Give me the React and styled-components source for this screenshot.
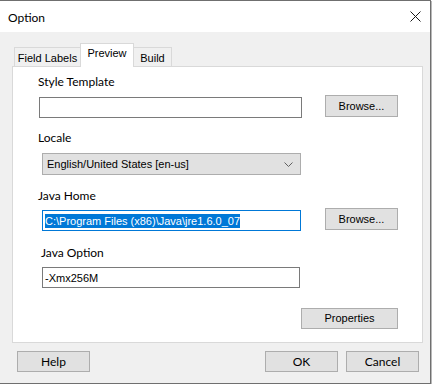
import React from "react";
import styled, { createGlobalStyle } from "styled-components";

const Global = createGlobalStyle`
  html, body { margin: 0; padding: 0; background: #ffffff; }
  body { font-family: "Liberation Sans", Arial, sans-serif; }
`;

const ui = `Lato, "Noto Sans", sans-serif`;
const ms = `"Liberation Sans", Arial, sans-serif`;

const Window = styled.div`
  width: 430px;
  height: 382px;
  border-top: 1px solid #6f6f6f;
  border-right: 1px solid #6f6f6f;
  border-bottom: 1px solid #6f6f6f;
  box-shadow: 1px 1px 0 #b8b8b8;
  display: flex;
  flex-direction: column;
  background: #f0f0f0;
  overflow: hidden;
`;

const TitleBar = styled.div`
  height: 31px;
  flex: none;
  background: #ffffff;
  display: flex;
  align-items: center;
  justify-content: space-between;
  padding: 0 9px 0 8px;
`;

const Title = styled.span`
  font-family: ${ui};
  font-size: 12px;
  color: #000;
  margin-top: 1px;
`;

const Close = styled.svg`
  width: 11px;
  height: 11px;
`;

const Body = styled.div`
  flex: 1;
  display: flex;
  flex-direction: column;
  padding: 11px 7px 0 12px;
`;

const TabStrip = styled.div`
  display: flex;
  align-items: flex-end;
  padding-left: 2px;
  height: 24px;
  position: relative;
  z-index: 1;
`;

const Tab = styled.div`
  height: ${(p) => (p.$active ? "24px" : "20px")};
  box-sizing: border-box;
  border: 1px solid #d9d9d9;
  border-bottom: ${(p) => (p.$active ? "none" : "1px solid #d9d9d9")};
  margin-left: ${(p) => (p.$first ? "0" : "-1px")};
  background: ${(p) => (p.$active ? "#ffffff" : "#f0f0f0")};
  font-family: ${ms};
  font-size: 11px;
  color: #000;
  display: flex;
  align-items: center;
  justify-content: center;
  white-space: nowrap;
  padding-top: ${(p) => (p.$active ? "0" : "2px")};
  padding-bottom: ${(p) => (p.$active ? "5px" : "0")};
  width: ${(p) => p.$w}px;
`;

const Panel = styled.div`
  height: 277px;
  box-sizing: border-box;
  margin-top: -1px;
  border: 1px solid #d9d9d9;
  background: #ffffff;
  display: flex;
  flex-direction: column;
  padding: 7px 0 0 0;
`;

const Label = styled.div`
  font-family: ${ui};
  font-size: 12px;
  line-height: 16px;
  color: #000;
  margin-left: ${(p) => p.$x}px;
  margin-top: ${(p) => p.$top}px;
`;

const Row = styled.div`
  display: flex;
  align-items: flex-start;
  margin-top: ${(p) => p.$top}px;
  margin-left: ${(p) => p.$x}px;
`;

const TextBox = styled.div`
  box-sizing: border-box;
  width: ${(p) => p.$w}px;
  height: ${(p) => p.$h || 21}px;
  margin-top: ${(p) => p.$top || 0}px;
  border: 1px solid ${(p) => (p.$focus ? "#0078d7" : "#7a7a7a")};
  background: #ffffff;
  font-family: ${ms};
  font-size: 11px;
  color: #000;
  display: flex;
  align-items: center;
  padding-left: 2px;
  white-space: nowrap;
  overflow: hidden;
`;

const Selected = styled.span`
  background: #0078d7;
  color: #ffffff;
  line-height: 14px;
`;

const Select = styled.div`
  box-sizing: border-box;
  width: 259px;
  height: 22px;
  border: 1px solid #adadad;
  background: #e1e1e1;
  font-family: ${ms};
  font-size: 11px;
  color: #000;
  display: flex;
  align-items: center;
  justify-content: space-between;
  padding: 0 7px 0 4px;
`;

const Button = styled.div`
  box-sizing: border-box;
  width: ${(p) => p.$w || 73}px;
  height: ${(p) => p.$h || 22}px;
  border: 1px solid #adadad;
  background: #e1e1e1;
  font-family: ${(p) => (p.$ui ? ui : ms)};
  font-size: ${(p) => (p.$ui ? "12px" : "11px")};
  color: #000;
  display: flex;
  align-items: center;
  justify-content: center;
  margin-left: ${(p) => p.$ml || 0}px;
  padding-bottom: 1px;
`;

const Footer = styled.div`
  display: flex;
  align-items: center;
  margin-top: 8px;
  padding: 0 4px 0 5px;
`;

const Spacer = styled.div`
  flex: 1;
`;

export default function App() {
  return (
    <>
      <Global />
      <Window>
        <TitleBar>
          <Title>Option</Title>
          <Close viewBox="0 0 11 11">
            <path d="M0.5 0.5 L10.5 10.5 M10.5 0.5 L0.5 10.5" stroke="#1a1a1a" strokeWidth="1" fill="none" />
          </Close>
        </TitleBar>
        <Body>
          <TabStrip>
            <Tab $first $w={67}>Field Labels</Tab>
            <Tab $active $w={54}>Preview</Tab>
            <Tab $w={39}>Build</Tab>
          </TabStrip>
          <Panel>
            <Label $x={25} $top={0}>Style Template</Label>
            <Row $x={26} $top={5}>
              <TextBox $w={263} $top={2} />
              <Button $ml={23}>Browse...</Button>
            </Row>
            <Label $x={25} $top={12}>Locale</Label>
            <Row $x={29} $top={7}>
              <Select>
                English/United States [en-us]
                <svg width="9" height="5" viewBox="0 0 9 5">
                  <path d="M0.5 0.5 L4.5 4.5 L8.5 0.5" stroke="#606060" strokeWidth="1" fill="none" />
                </svg>
              </Select>
            </Row>
            <Label $x={25} $top={13}>Java Home</Label>
            <Row $x={29} $top={4}>
              <TextBox $w={259} $top={2} $focus>
                <Selected>C:\Program Files (x86)\Java\jre1.6.0_07</Selected>
              </TextBox>
              <Button $ml={24}>Browse...</Button>
            </Row>
            <Label $x={28} $top={14}>Java Option</Label>
            <Row $x={29} $top={6}>
              <TextBox $w={258} $h={21}>-Xmx256M</TextBox>
            </Row>
            <Row $x={288} $top={20}>
              <Button $w={97} $h={21}>Properties</Button>
            </Row>
          </Panel>
          <Footer>
            <Button $ui $w={73} $h={21}>Help</Button>
            <Spacer />
            <Button $ui $w={73} $h={21}>OK</Button>
            <Button $ui $w={73} $h={21} $ml={8}>Cancel</Button>
          </Footer>
        </Body>
      </Window>
    </>
  );
}
